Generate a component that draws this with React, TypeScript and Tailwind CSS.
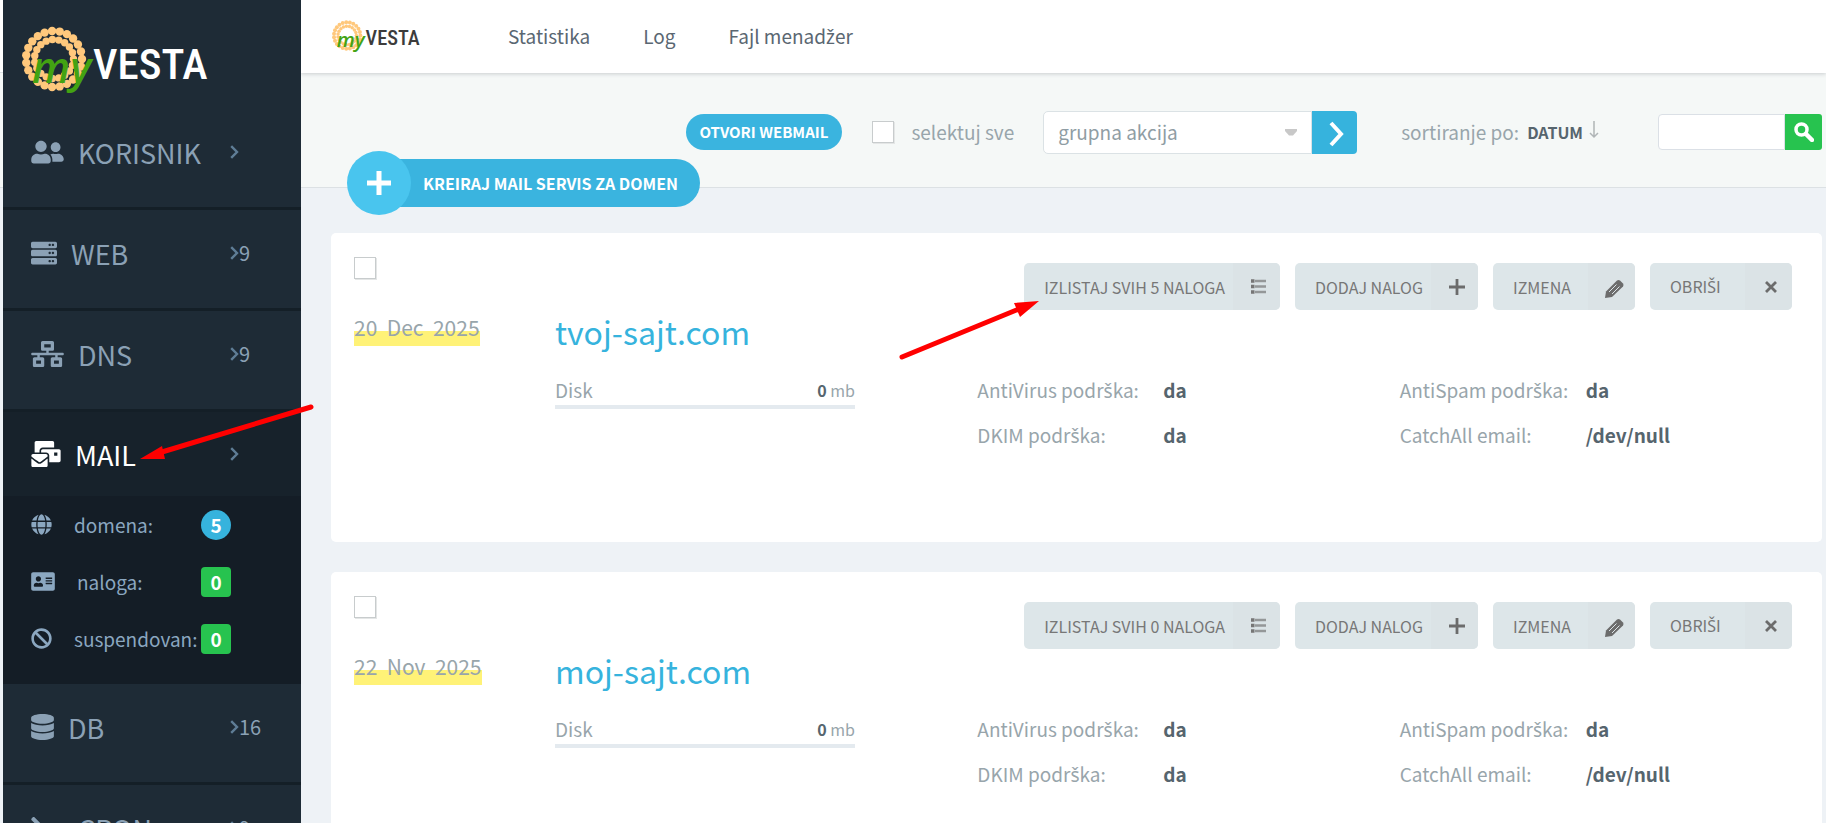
import React, { useState } from 'react';
import type { IconType } from 'react-icons';
import {
  FaAddressCard,
  FaBan,
  FaDatabase,
  FaGlobe,
  FaMailBulk,
  FaNetworkWired,
  FaServer,
  FaTerminal,
  FaUserFriends,
} from 'react-icons/fa';

type Domain = { name: string; date: string; accounts: number };

const DOMAINS: Domain[] = [
  { name: 'tvoj-sajt.com', date: '20  Dec  2025', accounts: 5 },
  { name: 'moj-sajt.com', date: '22  Nov  2025', accounts: 0 },
];

function Latin({ text }: { text: string }) {
  return (
    <span>
      {text.split(/([šžŠŽ])/).map((part, i) =>
        i % 2 ? (
          <span key={i} className="font-['Noto_Sans',sans-serif]">
            {part}
          </span>
        ) : (
          part
        )
      )}
    </span>
  );
}

function beads(count: number, radius: number, size: number) {
  return Array.from({ length: count }, (_, i) => {
    const a = (i / count) * Math.PI * 2;
    return <circle key={`${radius}-${i}`} cx={34 + radius * Math.cos(a)} cy={35 + radius * Math.sin(a)} r={size} />;
  });
}

function Logo({ className, letters }: { className: string; letters: string }) {
  return (
    <svg viewBox="0 0 190 74" className={className} role="img" aria-label="myVESTA">
      <g fill="#ffc87c">
        {beads(23, 28, 4.2)}
        {beads(19, 19.5, 3.7)}
      </g>
      <text x="73" y="55" fontSize="43" fontWeight="500" fontFamily="'Liberation Sans Narrow', 'Roboto Condensed', 'Liberation Sans', sans-serif" className={letters}>
        VESTA
      </text>
      <text x="12" y="59" fontSize="43" fontStyle="italic" fontWeight="600" fontFamily="'Open Sans', sans-serif" fill="#43a312">
        my
      </text>
    </svg>
  );
}

function Chevron() {
  return (
    <svg viewBox="0 0 9 14" className="h-[14px] w-[9px] shrink-0" fill="none" stroke="#5f7d96" strokeWidth="2.4">
      <path d="M1.2 1.2 7 7l-5.800 5.800" />
    </svg>
  );
}

type MenuItemProps = { icon: IconType; iconSize: string; label: string; count?: number; active?: boolean };

function MenuItem({ icon: Icon, iconSize, label, count, active }: MenuItemProps) {
  return (
    <a href="#" className={active ? 'flex h-[84px] items-center pl-7 text-white' : 'flex h-[86px] items-center pl-7 text-[#8ba1b5]'}>
      <span className="flex w-[199px] shrink-0 items-center gap-[14px] text-[27px] leading-none">
        <Icon className={iconSize} />
        {label}
      </span>
      <Chevron />
      {count !== undefined && <span className="text-xl leading-none">{count}</span>}
    </a>
  );
}

type SubItemProps = { icon: IconType; iconSize: string; label: string; count: number; round?: boolean };

function SubItem({ icon: Icon, iconSize, label, count, round }: SubItemProps) {
  return (
    <a href="#" className="flex h-[57px] items-center pl-7 text-[19px] leading-none text-[#8ba7c0]">
      <span className="flex w-[170px] shrink-0 items-center gap-[22px] whitespace-nowrap">
        <Icon className={iconSize} />
        {label}
      </span>
      <span
        className={
          round
            ? 'flex size-[30px] items-center justify-center rounded-full bg-[#36b3dd] font-bold text-white'
            : 'flex size-[30px] items-center justify-center rounded bg-[#27c34f] font-bold text-white'
        }
      >
        {count}
      </span>
    </a>
  );
}

function Sidebar() {
  return (
    <nav className="relative z-20 w-[298px] shrink-0 bg-[#1e2b36]">
      <a href="#" className="block h-[109px] pt-6 pl-[17px]">
        <Logo className="h-[74px] w-[190px]" letters="fill-white" />
      </a>
      <div className="border-b-3 border-[#141f27] pb-3">
        <MenuItem icon={FaUserFriends} iconSize="h-[26px] w-[33px]" label="KORISNIK" />
      </div>
      <div className="border-b-3 border-[#141f27] pb-3">
        <MenuItem icon={FaServer} iconSize="size-[26px]" label="WEB" count={9} />
      </div>
      <div className="border-b-3 border-[#141f27] pb-3">
        <MenuItem icon={FaNetworkWired} iconSize="h-[26px] w-[33px]" label="DNS" count={9} />
      </div>
      <div className="relative bg-[#17222b]">
        <MenuItem icon={FaMailBulk} iconSize="h-[26px] w-[30px]" label="MAIL" active />
        <svg viewBox="0 0 180 62" className="pointer-events-none absolute -top-[10px] left-[135px] h-[62px] w-[180px]">
          <path d="M173 5 24 50" stroke="#f00" strokeWidth="5" strokeLinecap="round" />
          <path d="M2 57 24 44 27 57Z" fill="#f00" />
        </svg>
      </div>
      <div className="bg-[#141d26] pb-[17px]">
        <SubItem icon={FaGlobe} iconSize="size-[21px]" label="domena:" count={5} round />
        <SubItem icon={FaAddressCard} iconSize="h-[21px] w-6" label="naloga:" count={0} />
        <SubItem icon={FaBan} iconSize="size-[21px]" label="suspendovan:" count={0} />
      </div>
      <div className="border-b-3 border-[#141f27] pb-3">
        <MenuItem icon={FaDatabase} iconSize="h-[26px] w-[23px]" label="DB" count={16} />
      </div>
      <MenuItem icon={FaTerminal} iconSize="h-[26px] w-[33px]" label="CRON" count={9} />
    </nav>
  );
}

const CHECKBOX = 'size-[22px] shrink-0 appearance-none border border-[#c8cccd] bg-white shadow-[1px_1px_0_#e4e6e6] checked:bg-[#36b3dd]';

function Toolbar() {
  const [query, setQuery] = useState('');

  return (
    <div className="relative flex h-[115px] items-center justify-end border-b border-[#dce1e4] bg-[#f5f8f7] pt-1 pr-1 text-[19px] text-[#98a5ab]">
      <a href="#" className="flex h-9 items-center rounded-full bg-[#3ab4df] px-[14px] text-[15px] font-bold text-white">
        OTVORI WEBMAIL
      </a>
      <label className="ml-[30px] flex items-center gap-[17px]">
        <input type="checkbox" className={CHECKBOX} />
        selektuj sve
      </label>
      <div className="relative ml-[29px] flex">
        <select aria-label="grupna akcija" className="h-[43px] w-[269px] appearance-none rounded-l-[5px] border border-[#dbe2e5] bg-white pl-[14px] text-[19px] text-[#8f9da4]">
          <option>grupna akcija</option>
        </select>
        <svg viewBox="0 0 12 7" className="pointer-events-none absolute top-[18px] left-[242px] h-[7px] w-3 fill-[#c8c8c8]">
          <path d="M0 0h12v2L8 6.500H4L0 2z" />
        </svg>
        <button type="button" aria-label="Primeni" className="flex h-[43px] w-[45px] items-center justify-center rounded-r-[4px] bg-[#36b3dd] pt-1 pl-1">
          <svg viewBox="0 0 16 26" className="h-[26px] w-4" fill="none" stroke="#fff" strokeWidth="4">
            <path d="M2 2 12 13 2 24" />
          </svg>
        </button>
      </div>
      <button type="button" className="ml-[44px] flex items-center">
        sortiranje po:
        <b className="ml-2 text-base text-[#56656e]">DATUM</b>
        <svg viewBox="0 0 10 18" className="mb-1 ml-[6px] h-[18px] w-[10px]" fill="none" stroke="#b0b5b7" strokeWidth="1.500">
          <path d="M5 0v16M1 12l4 4 4-4" />
        </svg>
      </button>
      <form className="ml-[59px] flex" onSubmit={(e) => e.preventDefault()}>
        <input
          aria-label="Pretraga"
          className="h-9 w-[127px] rounded-l-[4px] border border-[#dbe0e6] bg-white px-2 text-base"
          value={query}
          onChange={(e) => setQuery(e.target.value)}
        />
        <button aria-label="Traži" className="flex h-9 w-[37px] items-center justify-center rounded-r-[3px] bg-[#27c34f]">
          <svg viewBox="0 0 20 20" className="size-5" fill="none" stroke="#fff">
            <circle cx="7.500" cy="7.500" r="5.500" strokeWidth="3.500" />
            <path d="m12 12 6 6" strokeWidth="4.500" strokeLinecap="round" />
          </svg>
        </button>
      </form>
      <a href="#" className="absolute -bottom-7 left-[46px] flex h-[65px] items-center">
        <span className="z-10 flex size-16 items-center justify-center rounded-full bg-[#49c5ee]">
          <svg viewBox="0 0 24 24" className="size-6" stroke="#fff" strokeWidth="5">
            <path d="M12 0v24M0 12h24" />
          </svg>
        </span>
        <span className="-ml-8 flex h-12 items-center rounded-r-full bg-[#3ab4df] pr-[22px] pl-11 text-base font-bold text-white">
          KREIRAJ MAIL SERVIS ZA DOMEN
        </span>
      </a>
    </div>
  );
}

function ActionButton({ label, children }: { label: string; children: React.ReactNode }) {
  return (
    <button type="button" className="flex h-[47px] overflow-hidden rounded-[5px] bg-[#dde6e9] text-base text-[#777]">
      <span className="flex h-full min-w-[95px] items-center pr-2 pl-5">
        <Latin text={label} />
      </span>
      <span className="flex h-full w-[47px] items-center justify-center bg-[#dbe3e6] pl-1">{children}</span>
    </button>
  );
}

function Row({ label, value }: { label: string; value: string }) {
  return (
    <div className="flex h-[45px] items-center">
      <dt className="w-[186px] shrink-0">
        <Latin text={label} />
      </dt>
      <dd className="font-bold text-[#56656e]">{value}</dd>
    </div>
  );
}

function DomainCard({ domain, marked }: { domain: Domain; marked: boolean }) {
  return (
    <article className="h-[309px] rounded-[5px] bg-white pl-[23px] text-[19px] text-[#98a5ab]">
      <div className="flex items-start justify-between pr-[30px]">
        <input type="checkbox" aria-label={domain.name} className={`mt-6 ${CHECKBOX}`} />
        <div className="relative flex gap-[15px] pt-[30px]">
          <ActionButton label={`IZLISTAJ SVIH ${domain.accounts} NALOGA`}>
            <svg viewBox="0 0 15 15" className="size-[15px]" stroke="#777">
              <path d="M0 2h3.500M0 7.500h3.500M0 13h3.500" strokeWidth="3.500" />
              <path d="M4 2h11M4 7.500h11M4 13h11" strokeWidth="2.400" opacity="0.700" />
            </svg>
          </ActionButton>
          <ActionButton label="DODAJ NALOG">
            <svg viewBox="0 0 16 16" className="size-4" stroke="#6c6c6c" strokeWidth="2.800">
              <path d="M8 0v16M0 8h16" />
            </svg>
          </ActionButton>
          <ActionButton label="IZMENA">
            <svg viewBox="0 0 20 20" className="mt-1 size-5">
              <path d="M1 19 2 12.500 13 1.500q1.500-1 3 0l3 3q1 1.500 0 3L8 18z" fill="#6c6c6c" />
              <path d="m5 13 7.500-7.500M8 15l7.500-7.500" stroke="#dbe3e6" strokeWidth="1" />
            </svg>
          </ActionButton>
          <ActionButton label="OBRIŠI">
            <svg viewBox="0 0 12 12" className="size-3" stroke="#6c6c6c" strokeWidth="2.800">
              <path d="m1 1 10 10M11 1 1 11" />
            </svg>
          </ActionButton>
          {marked && (
            <svg viewBox="0 0 144 63" className="pointer-events-none absolute top-[65px] -left-[127px] h-[63px] w-36">
              <path d="M5 59 122 11" stroke="#f00" strokeWidth="5" strokeLinecap="round" />
              <path d="M142 3 117 5 123 19Z" fill="#f00" />
            </svg>
          )}
        </div>
      </div>
      <div className="grid grid-cols-[201px_1fr_1fr_1fr]">
        <div className="pt-1">
          <time className="inline-block h-[30px] bg-linear-to-b from-transparent from-50% to-[#fff277] to-50% text-[21px] leading-[22px] whitespace-pre">
            {domain.date}
          </time>
        </div>
        <h2 className="col-span-3 h-[58px] text-[32px] leading-[42px]">
          <a href="#" className="text-[#36b3dd]">
            {domain.name}
          </a>
        </h2>
        <div className="col-start-2">
          <div className="flex h-[41px] w-[300px] items-center justify-between border-b-4 border-[#e4eaef] pt-[7px]">
            <span>Disk</span>
            <span className="text-base">
              <b className="text-[#56656e]">0</b> mb
            </span>
          </div>
        </div>
        <dl>
          <Row label="AntiVirus podrška:" value="da" />
          <Row label="DKIM podrška:" value="da" />
        </dl>
        <dl>
          <Row label="AntiSpam podrška:" value="da" />
          <Row label="CatchAll email:" value="/dev/null" />
        </dl>
      </div>
    </article>
  );
}

export default function App() {
  return (
    <div className="flex h-screen overflow-hidden bg-[#eef2f6] font-['Noto_Sans_CJK_SC','Noto_Sans',sans-serif]">
      {/* thin gutter left of the sidebar, continues the header and toolbar bands */}
      <div className="w-[3px] shrink-0">
        <div className="h-[73px] border-b border-[#dce1e4] bg-white" />
        <div className="h-[115px] border-b border-[#dce1e4] bg-[#f5f8f7]" />
      </div>
      <Sidebar />
      <div className="min-w-0 flex-1">
        <header className="relative z-10 flex h-[73px] items-center bg-white pl-[30px] text-[19px] text-[#5a6772] shadow-[0_1px_4px_#c9cdcf]">
          <a href="#">
            <Logo className="h-[35px] w-[90px]" letters="fill-[#3c3c3c]" />
          </a>
          <nav className="ml-[87px] flex gap-[53px]">
            <a href="#">Statistika</a>
            <a href="#">Log</a>
            <a href="#">
              <Latin text="Fajl menadžer" />
            </a>
          </nav>
        </header>
        <Toolbar />
        <main className="flex flex-col gap-[30px] pt-[45px] pr-1 pl-[30px]">
          {DOMAINS.map((domain, i) => (
            <DomainCard key={domain.name} domain={domain} marked={i === 0} />
          ))}
        </main>
      </div>
    </div>
  );
}
